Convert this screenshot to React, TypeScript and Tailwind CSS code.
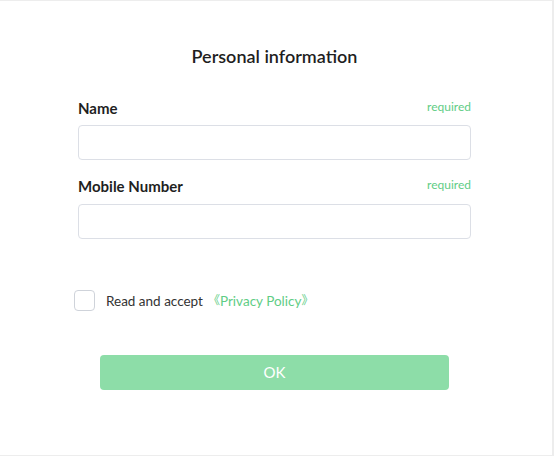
export default function App() {
  return (
    <div
      className="w-[554px] h-[456px] bg-white border-t border-b border-r-2 border-[#ededed] overflow-hidden"
      style={{ fontFamily: 'Lato, "Noto Sans CJK SC", sans-serif' }}
    >
      <div className="w-[393px] ml-[78px] pt-[42px]">
        <h1 className="text-center text-[18px] leading-[26px] font-semibold text-[#1f1f1f]">
          Personal information
        </h1>

        {/* Name */}
        <div className="mt-[29px] flex items-end justify-between">
          <label className="text-[15px] leading-[20px] font-bold text-[#1f1f1f]">Name</label>
          <span className="text-[12px] leading-[16px] text-[#5fcd85] -translate-y-[3px]">required</span>
        </div>
        <input
          className="mt-[7px] block w-full h-[35px] rounded-[4px] border border-[#dcdfe6] outline-none px-3 text-sm"
          type="text"
        />

        {/* Mobile */}
        <div className="mt-[16px] flex items-end justify-between">
          <label className="text-[15px] leading-[20px] font-bold text-[#1f1f1f]">Mobile Number</label>
          <span className="text-[12px] leading-[16px] text-[#5fcd85] -translate-y-[3px]">required</span>
        </div>
        <input
          className="mt-[8px] block w-full h-[35px] rounded-[4px] border border-[#dcdfe6] outline-none px-3 text-sm"
          type="text"
        />
      </div>

      {/* Privacy */}
      <div className="ml-[74px] mt-[51px] flex items-center">
        <span className="w-[21px] h-[21px] rounded-[4px] border border-[#cfd3da] bg-white" />
        <span className="ml-[11px] text-[13.5px] leading-[20px] text-[#333]">Read and accept</span>
        <span className="ml-[5px] flex items-center text-[13.5px] leading-[20px] text-[#5fcd85]">
          <span className="text-[12px]">《</span>
          <span>Privacy Policy</span>
          <span className="text-[12px]">》</span>
        </span>
      </div>

      <div className="ml-[100px] mt-[44px]">
        <button className="w-[349px] h-[35px] rounded-[4px] bg-[#8ddda8] text-white text-[15px]">
          OK
        </button>
      </div>
    </div>
  );
}
